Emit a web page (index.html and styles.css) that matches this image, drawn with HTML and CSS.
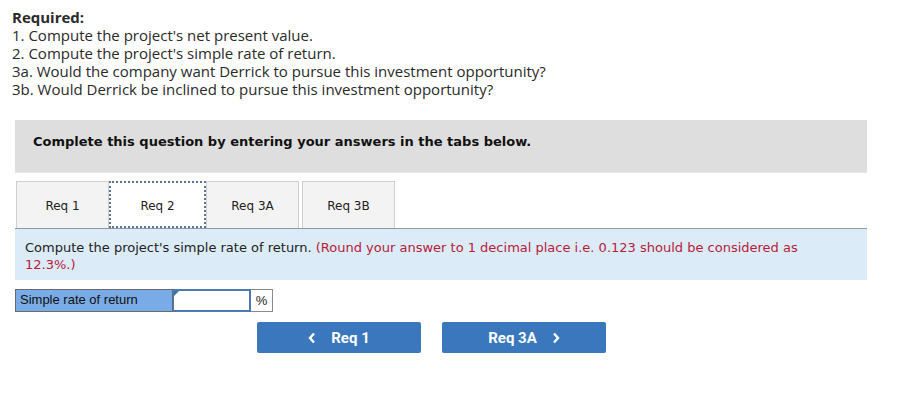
FILE: index.html
```html
<!DOCTYPE html>
<html>
<head>
<meta charset="utf-8">
<link rel="stylesheet" href="styles.css">
</head>
<body>
<div class="page">
  <div class="required">
    <div class="req-title">Required:</div>
    <div>1. Compute the project's net present value.</div>
    <div>2. Compute the project's simple rate of return.</div>
    <div>3a. Would the company want Derrick to pursue this investment opportunity?</div>
    <div>3b. Would Derrick be inclined to pursue this investment opportunity?</div>
  </div>
  <div class="instr">Complete this question by entering your answers in the tabs below.</div>
  <div class="tabs">
    <div class="tab">Req 1</div>
    <div class="tab active">Req 2</div>
    <div class="tab">Req 3A</div>
    <div class="tab gap">Req 3B</div>
  </div>
  <p class="panel">Compute the project's simple rate of return. <span class="red">(Round your answer to 1 decimal place i.e. 0.123 should be considered as 12.3%.)</span></p>
  <div class="row">
    <div class="label">Simple rate of return</div>
    <div class="input"><span class="flag"></span></div>
    <div class="pct">%</div>
  </div>
  <div class="nav">
    <div class="btn"><svg class="chev" width="8" height="12" viewBox="0 0 8 12"><polyline points="6,1.5 2,6 6,10.5" fill="none" stroke="#fff" stroke-width="2.4"/></svg><span>Req 1</span></div>
    <div class="btn"><span>Req 3A</span><svg class="chev" width="8" height="12" viewBox="0 0 8 12"><polyline points="2,1.5 6,6 2,10.5" fill="none" stroke="#fff" stroke-width="2.4"/></svg></div>
  </div>
</div>
</body>
</html>
```
FILE: styles.css
```css
body { margin: 0; background: #fff; }
.page { padding: 8px 0 0 12px; width: 855px; }
.required { font-family: "Open Sans", sans-serif; font-size: 15px; line-height: 18px; color: #2a2a2a; }
.req-title { font-weight: bold; }
.instr { margin: 22px 0 0 3px; height: 53px; background: #dedede; box-sizing: border-box; padding: 14px 0 0 18px; font-family: "DejaVu Sans", Verdana, sans-serif; font-weight: bold; font-size: 13px; color: #111; border-bottom: 1px solid #e6e6e6; }
.tabs { display: flex; margin: 8px 0 0 4px; height: 47px; }
.tab { width: 93px; box-sizing: border-box; background: #f3f3f3; border: 1px solid #cfcfcf; border-bottom: none; display: flex; align-items: center; justify-content: center; font-family: "DejaVu Sans", Verdana, sans-serif; font-size: 12px; color: #222; padding-top: 2px; }
.tab.active { width: 97px; background: #fff; border: 2px dotted #5a73a0; border-bottom: 2px dotted #5a73a0; }
.tab.gap { margin-left: 3px; }
.panel { margin: 0 0 0 3px; height: 52px; box-sizing: border-box; background: #dbebf8; border-top: 1px solid #8d9aa5; padding: 10px 45px 0 10px; font-family: "DejaVu Sans", Verdana, sans-serif; font-size: 13px; line-height: 17px; color: #222; }
.red { color: #b8203a; }
.row { display: flex; margin: 9px 0 0 3px; height: 23px; }
.label { width: 158px; box-sizing: border-box; background: #79abe6; border: 1px solid #6a6a6a; font-family: "Liberation Sans", Arial, sans-serif; font-size: 13px; padding: 2px 0 0 4px; color: #111; }
.input { width: 78px; box-sizing: border-box; background: #fff; border: 2px solid #4c79b4; border-left: 1px solid #4c79b4; position: relative; }
.flag { position: absolute; left: 0; top: 0; width: 0; height: 0; border-top: 5px solid #3b6fb0; border-right: 5px solid transparent; border-bottom: 3px solid transparent; }
.pct { width: 22px; box-sizing: border-box; border: 1px solid #8a8a8a; border-left: none; font-family: "Liberation Sans", Arial, sans-serif; font-size: 13px; display: flex; align-items: center; justify-content: center; color: #222; }
.nav { display: flex; gap: 21px; margin: 10px 0 0 245px; }
.btn { width: 164px; height: 31px; background: #3a77bd; border-radius: 2px; color: #fff; font-family: Roboto, sans-serif; font-weight: bold; font-size: 15px; display: flex; align-items: center; justify-content: center; gap: 15px; }
.chev { display: block; }
```
